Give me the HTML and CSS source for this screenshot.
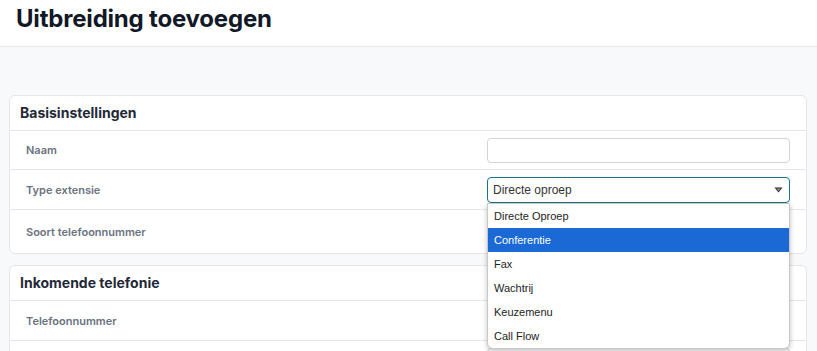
FILE: index.html
```html
<!DOCTYPE html>
<html lang="nl">
<head>
<meta charset="utf-8">
<title>Uitbreiding toevoegen</title>
<link rel="stylesheet" href="styles.css">
</head>
<body>
<header class="topbar">
  <h1 class="title">Uitbreiding toevoegen</h1>
</header>
<main class="content">
  <section class="card">
    <h2 class="card-title">Basisinstellingen</h2>
    <div class="row">
      <span class="label">Naam</span>
      <div class="control"><div class="input"></div></div>
    </div>
    <div class="row row-mid">
      <span class="label">Type extensie</span>
      <div class="control">
        <div class="select">
          <span>Directe oproep</span>
          <svg class="caret" width="9" height="6" viewBox="0 0 9 6"><path d="M0.5 0.5h8L4.5 5.5z" fill="#2b2b2b"/><path d="M2.5 1.5h4L4.5 4z" fill="#9a9a9a"/></svg>
        </div>
        <ul class="menu">
          <li>Directe Oproep</li>
          <li class="active">Conferentie</li>
          <li>Fax</li>
          <li>Wachtrij</li>
          <li>Keuzemenu</li>
          <li>Call Flow</li>
        </ul>
      </div>
    </div>
    <div class="row row-last">
      <span class="label">Soort telefoonnummer</span>
      <div class="control"><div class="input"></div></div>
    </div>
  </section>
  <section class="card">
    <h2 class="card-title">Inkomende telefonie</h2>
    <div class="row row-mid">
      <span class="label">Telefoonnummer</span>
      <div class="control"><div class="input"></div></div>
    </div>
    <div class="row">
      <span class="label"></span>
      <div class="control"><div class="input"></div></div>
    </div>
  </section>
</main>
</body>
</html>
```
FILE: styles.css
```css
* { box-sizing: border-box; }
html, body { margin: 0; padding: 0; }
body {
  background: #f8f9fb;
  font-family: Inter, "Noto Sans", sans-serif;
  color: #111827;
  overflow: hidden;
  height: 351px;
}
.topbar {
  background: #ffffff;
  height: 47px;
  border-bottom: 1px solid #e6e8ec;
  padding: 4px 16px 0;
}
.title {
  margin: 0;
  font-size: 24px;
  font-weight: 700;
  letter-spacing: -0.2px;
  line-height: 30px;
  color: #111827;
}
.content {
  padding: 48px 10px 0 9px;
  display: flex;
  flex-direction: column;
  gap: 11px;
}
.card {
  background: #fff;
  border: 1px solid #e4e6ea;
  border-radius: 6px;
}
.card-title {
  margin: 0;
  font-size: 14px;
  font-weight: 700;
  color: #1f2937;
  height: 35px;
  line-height: 34px;
  padding: 0 10px;
  border-bottom: 1px solid #e4e6ea;
}
.row {
  display: grid;
  grid-template-columns: 1fr 303px;
  align-items: center;
  padding: 6px 16px 6px 16px;
  min-height: 39px;
  border-bottom: 1px solid #e4e6ea;
}
.row:last-child { border-bottom: none; }
.row-mid { min-height: 40px; }
.row-last { min-height: 43px; }
.label {
  font-size: 11px;
  font-weight: 600;
  color: #6b7280;
}
.control { position: relative; }
.input {
  height: 25px;
  border: 1px solid #d1d5db;
  border-radius: 4px;
  background: #fff;
}
.select {
  height: 26px;
  border: 1px solid #167788;
  border-radius: 4px;
  background: #fff;
  display: flex;
  align-items: center;
  justify-content: space-between;
  padding: 0 6px 0 5px;
  font-family: "Liberation Sans", Arial, sans-serif;
  font-size: 12px;
  color: #333;
}
.caret { margin-top: 1px; }
.menu {
  position: absolute;
  left: 0;
  right: 0;
  top: 26px;
  margin: 0;
  padding: 0;
  list-style: none;
  background: #fff;
  border: 1px solid #c9c9c9;
  border-radius: 0 0 6px 6px;
  box-shadow: 0 2px 5px rgba(0,0,0,0.25);
  font-family: "Liberation Sans", Arial, sans-serif;
  font-size: 11px;
  color: #222;
  overflow: hidden;
  z-index: 5;
}
.menu li {
  height: 24px;
  line-height: 24px;
  padding: 0 6px;
}
.menu li.active {
  background: #1a69d4;
  color: #fff;
}
```
